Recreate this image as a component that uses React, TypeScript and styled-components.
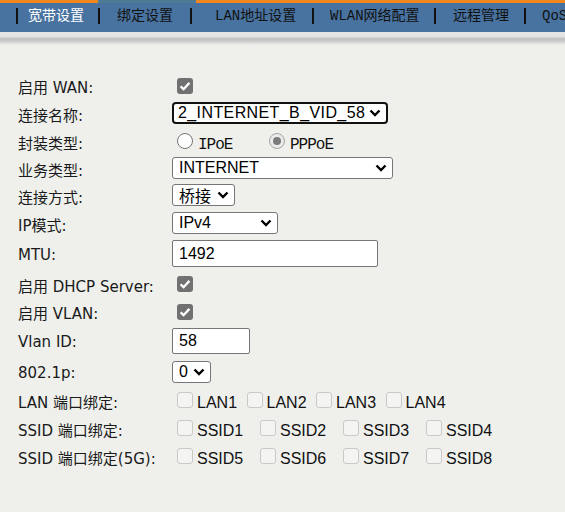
import { Fragment } from "react"
import styled, { createGlobalStyle } from "styled-components"

const GlobalStyle = createGlobalStyle`
  body {
    margin: 0;
    background: #eff0ec;
  }
`

const Page = styled.div`
  width: 565px;
  min-height: 512px;
  background: #eff0ec;
  overflow: hidden;
`

const TopStrip = styled.div`
  display: flex;
  height: 3px;
  background: #f1871f;
`

const StripMark = styled.div`
  margin-left: 98px;
  width: 98px;
  background: #4e7a93;
`

const NavBar = styled.div`
  display: flex;
  align-items: center;
  height: 29px;
  padding: 0 0 4px 16px;
  box-sizing: border-box;
  background: #4873a0;
  white-space: nowrap;
  overflow: hidden;
  font-family: "Liberation Mono", "Noto Sans CJK SC", monospace;
  font-size: 14px;
`

const NavSep = styled.span`
  flex-shrink: 0;
  width: 2px;
  height: 16px;
  background: #111;
`

const Tab = styled.span<{ $w?: number; $pl: number; $active?: boolean }>`
  flex-shrink: 0;
  box-sizing: border-box;
  width: ${(p) => (p.$w ? `${p.$w}px` : "auto")};
  padding-left: ${(p) => p.$pl}px;
  line-height: 16px;
  color: ${(p) => (p.$active ? "#fff" : "#111")};
`

const Shadow = styled.div`
  height: 13px;
  background: linear-gradient(
    to bottom,
    #e6e6e6 0px,
    #e3e3e3 5px,
    #c6c6c6 6px,
    #c2c2c2 8px,
    #eff0ec 13px
  );
`

const Form = styled.div`
  padding: 27px 0 0 18px;
`

const Row = styled.div<{ $h: number }>`
  display: flex;
  align-items: center;
  height: ${(p) => p.$h}px;
`

const Label = styled.div`
  flex-shrink: 0;
  width: 154px;
  padding-top: 2px;
  font-family: "DejaVu Sans", "Noto Sans CJK SC", sans-serif;
  font-size: 15px;
  color: #1a1a1a;
  white-space: nowrap;
`

const Control = styled.div`
  display: flex;
  align-items: center;
`

const Box = styled.span<{ $on?: boolean }>`
  display: inline-flex;
  align-items: center;
  justify-content: center;
  flex-shrink: 0;
  box-sizing: border-box;
  width: 16px;
  height: 16px;
  margin-left: 5px;
  border-radius: 3px;
  background: ${(p) => (p.$on ? "#717171" : "#f4f5f2")};
  border: ${(p) => (p.$on ? "none" : "1px solid #c9cac7")};
`

const CheckGroup = styled.div<{ $col: number }>`
  display: grid;
  grid-template-columns: repeat(4, ${(p) => p.$col}px);
`

const CheckItem = styled.label`
  display: flex;
  align-items: center;
`

const CheckText = styled.span`
  margin-left: 4px;
  padding-top: 5px;
  font-family: "Liberation Sans", sans-serif;
  font-size: 16px;
  color: #111;
`

const RadioItem = styled.label<{ $w?: number }>`
  display: flex;
  align-items: center;
  box-sizing: border-box;
  width: ${(p) => (p.$w ? `${p.$w}px` : "auto")};
  padding-left: 5px;
`

const RadioDot = styled.span<{ $on?: boolean }>`
  position: relative;
  flex-shrink: 0;
  box-sizing: border-box;
  width: 16px;
  height: 16px;
  border-radius: 50%;
  border: 1px solid ${(p) => (p.$on ? "#a3a3a3" : "#767676")};
  background: ${(p) => (p.$on ? "#ebebeb" : "#fff")};

  &::after {
    content: "";
    display: ${(p) => (p.$on ? "block" : "none")};
    position: absolute;
    left: 3px;
    top: 3px;
    width: 8px;
    height: 8px;
    border-radius: 50%;
    background: #7b7b7b;
  }
`

const RadioText = styled.span`
  margin-left: 5px;
  padding-top: 7px;
  font-family: "Liberation Mono", monospace;
  font-size: 16px;
  letter-spacing: -1px;
  color: #111;
`

const SelectBox = styled.div<{ $w: number; $focus?: boolean }>`
  display: flex;
  align-items: center;
  justify-content: space-between;
  box-sizing: border-box;
  width: ${(p) => p.$w}px;
  height: 22px;
  padding: 0 5px 0 ${(p) => (p.$focus ? 4 : 6)}px;
  border: ${(p) => (p.$focus ? "2px solid #111" : "1px solid #767676")};
  border-radius: ${(p) => (p.$focus ? 4 : 3)}px;
  background: #fff;
  font-family: "Liberation Sans", "Noto Sans CJK SC", sans-serif;
  font-size: 16px;
  color: #000;
  white-space: nowrap;
`

const SelectValue = styled.span<{ $wide?: boolean }>`
  letter-spacing: ${(p) => (p.$wide ? "0.4px" : "0")};
`

const TextBox = styled.div<{ $w: number; $h: number }>`
  display: flex;
  align-items: center;
  box-sizing: border-box;
  width: ${(p) => p.$w}px;
  height: ${(p) => p.$h}px;
  padding-left: 6px;
  border: 1px solid #767676;
  border-radius: 2px;
  background: #fff;
  font-family: "Liberation Sans", sans-serif;
  font-size: 16px;
  color: #000;
`

const Chevron = () => (
  <svg width="12" height="8" viewBox="0 0 12 8">
    <polyline points="1.5,1.5 6,6 10.5,1.5" fill="none" stroke="#000" strokeWidth="2.4" />
  </svg>
)

const Tick = () => (
  <svg width="16" height="16" viewBox="0 0 16 16">
    <polyline points="3.6,8.3 6.6,11.2 12.4,4.9" fill="none" stroke="#fff" strokeWidth="2.3" />
  </svg>
)

const Check = ({ on }: { on?: boolean }) => <Box $on={on}>{on && <Tick />}</Box>

const Select = ({ w, value, focus }: { w: number; value: string; focus?: boolean }) => (
  <SelectBox $w={w} $focus={focus}>
    <SelectValue $wide={focus}>{value}</SelectValue>
    <Chevron />
  </SelectBox>
)

const tabs = [
  { text: "宽带设置", w: 80, pl: 10, active: true },
  { text: "绑定设置", w: 90, pl: 17 },
  { text: "LAN地址设置", w: 120, pl: 23 },
  { text: "WLAN网络配置", w: 120, pl: 16 },
  { text: "远程管理", w: 88, pl: 17 },
  { text: "QoS", pl: 16 },
]

const CheckRow = ({ label, items, col }: { label: string; items: string[]; col: number }) => (
  <Row $h={28}>
    <Label>{label}</Label>
    <CheckGroup $col={col}>
      {items.map((n) => (
        <CheckItem key={n}>
          <Check />
          <CheckText>{n}</CheckText>
        </CheckItem>
      ))}
    </CheckGroup>
  </Row>
)

const App = () => {
  return (
    <Page>
      <GlobalStyle />
      <TopStrip>
        <StripMark />
      </TopStrip>
      <NavBar>
        {tabs.map((t) => (
          <Fragment key={t.text}>
            <NavSep />
            <Tab $w={t.w} $pl={t.pl} $active={t.active}>
              {t.text}
            </Tab>
          </Fragment>
        ))}
      </NavBar>
      <Shadow />

      <Form>
        <Row $h={27}>
          <Label>启用 WAN:</Label>
          <Control>
            <Check on />
          </Control>
        </Row>
        <Row $h={28}>
          <Label>连接名称:</Label>
          <Control>
            <Select w={216} value="2_INTERNET_B_VID_58" focus />
          </Control>
        </Row>
        <Row $h={28}>
          <Label>封装类型:</Label>
          <Control>
            <RadioItem $w={92}>
              <RadioDot />
              <RadioText>IPoE</RadioText>
            </RadioItem>
            <RadioItem>
              <RadioDot $on />
              <RadioText>PPPoE</RadioText>
            </RadioItem>
          </Control>
        </Row>
        <Row $h={26}>
          <Label>业务类型:</Label>
          <Control>
            <Select w={221} value="INTERNET" />
          </Control>
        </Row>
        <Row $h={28}>
          <Label>连接方式:</Label>
          <Control>
            <Select w={63} value="桥接" />
          </Control>
        </Row>
        <Row $h={28}>
          <Label>IP模式:</Label>
          <Control>
            <Select w={106} value="IPv4" />
          </Control>
        </Row>
        <Row $h={33}>
          <Label>MTU:</Label>
          <Control>
            <TextBox $w={206} $h={27}>1492</TextBox>
          </Control>
        </Row>
        <Row $h={28}>
          <Label>启用 DHCP Server:</Label>
          <Control>
            <Check on />
          </Control>
        </Row>
        <Row $h={27}>
          <Label>启用 VLAN:</Label>
          <Control>
            <Check on />
          </Control>
        </Row>
        <Row $h={32}>
          <Label>Vlan ID:</Label>
          <Control>
            <TextBox $w={78} $h={26}>58</TextBox>
          </Control>
        </Row>
        <Row $h={29}>
          <Label>802.1p:</Label>
          <Control>
            <Select w={39} value="0" />
          </Control>
        </Row>
        <CheckRow label="LAN 端口绑定:" items={["LAN1", "LAN2", "LAN3", "LAN4"]} col={69.5} />
        <CheckRow label="SSID 端口绑定:" items={["SSID1", "SSID2", "SSID3", "SSID4"]} col={83} />
        <CheckRow label="SSID 端口绑定(5G):" items={["SSID5", "SSID6", "SSID7", "SSID8"]} col={83} />
      </Form>
    </Page>
  )
}

export default App
